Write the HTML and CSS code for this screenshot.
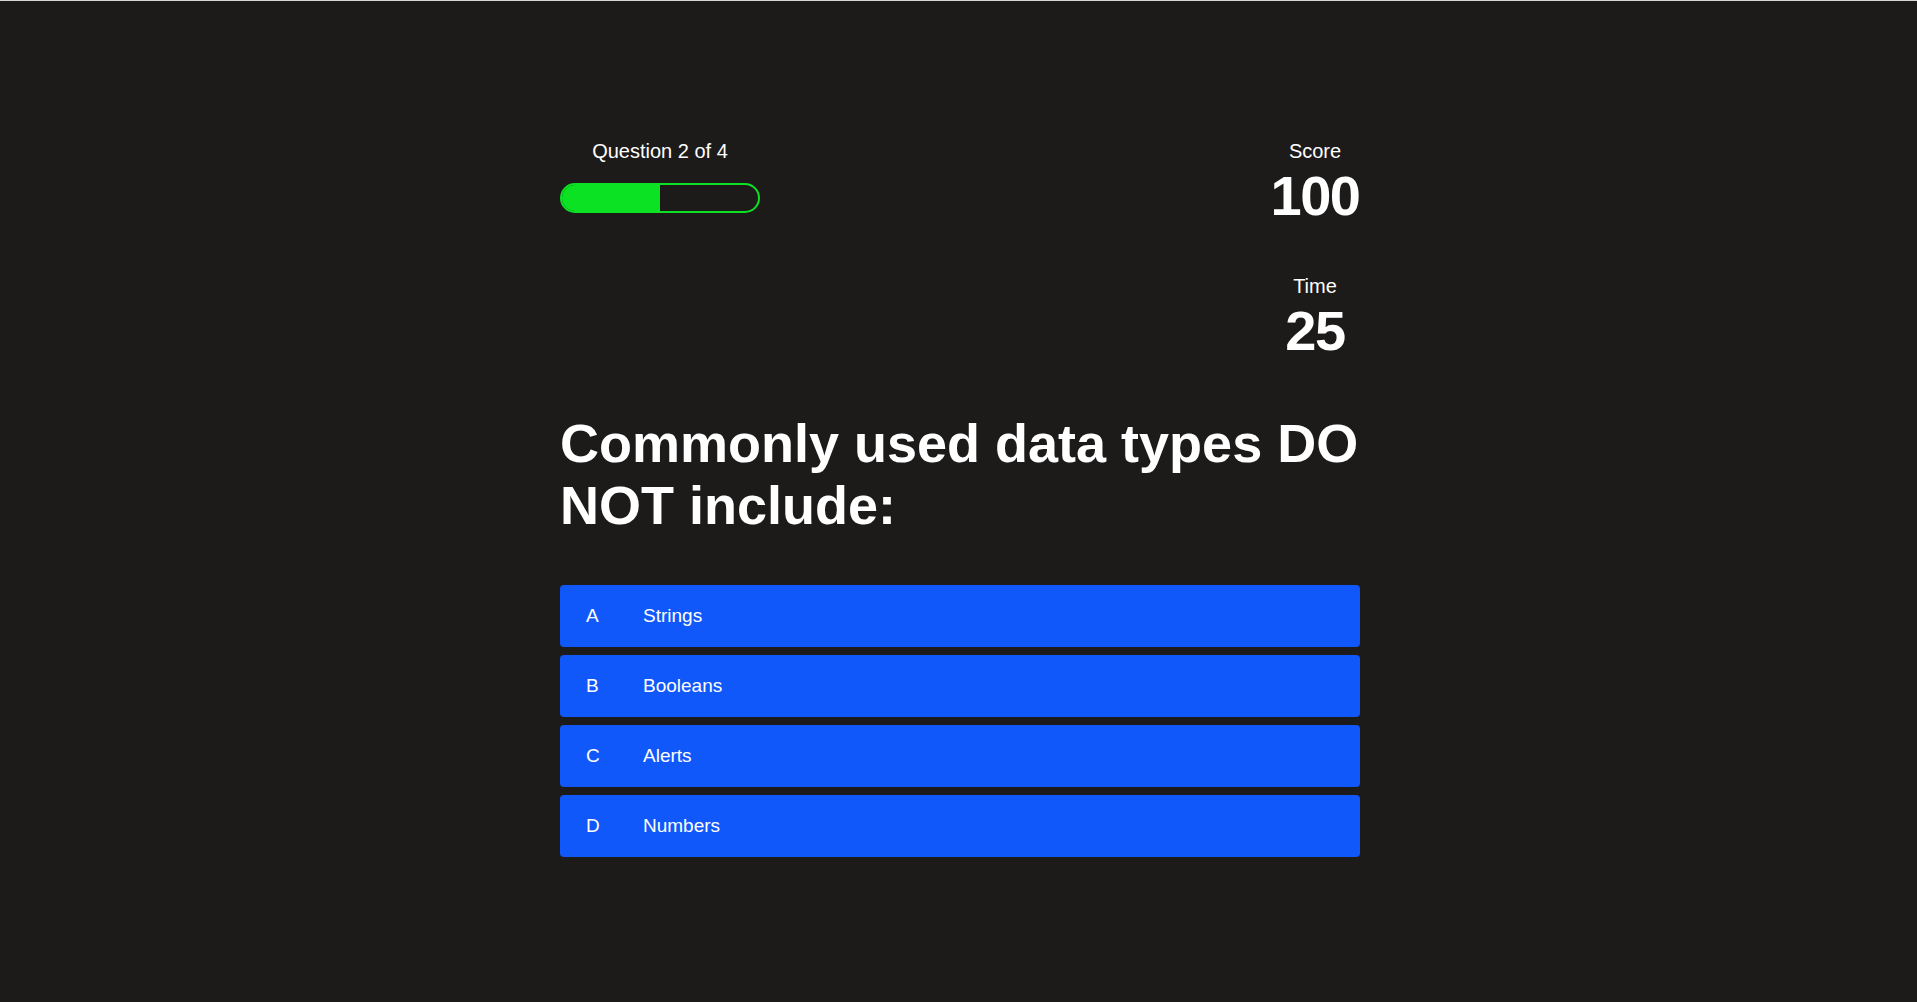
FILE: index.html
```html
<!DOCTYPE html>
<html lang="en">
<head>
<meta charset="utf-8">
<title>Quiz</title>
<link rel="stylesheet" href="styles.css">
</head>
<body>
<div class="page">
  <main class="quiz">
    <header class="top">
      <div class="progress">
        <div class="progress-label">Question 2 of 4</div>
        <div class="bar"><div class="bar-fill" style="width: 50%"></div></div>
      </div>
      <div class="stats">
        <div class="stat">
          <div class="stat-label">Score</div>
          <div class="stat-value">100</div>
        </div>
        <div class="stat stat-time">
          <div class="stat-label">Time</div>
          <div class="stat-value">25</div>
        </div>
      </div>
    </header>
    <h1 class="question">Commonly used data types DO NOT include:</h1>
    <div class="choices">
      <button class="choice"><span class="choice-key">A</span><span class="choice-text">Strings</span></button>
      <button class="choice"><span class="choice-key">B</span><span class="choice-text">Booleans</span></button>
      <button class="choice"><span class="choice-key">C</span><span class="choice-text">Alerts</span></button>
      <button class="choice"><span class="choice-key">D</span><span class="choice-text">Numbers</span></button>
    </div>
  </main>
</div>
</body>
</html>
```
FILE: styles.css
```css
* { box-sizing: border-box; }
html, body {
  margin: 0;
  padding: 0;
  background: #1c1b19;
}
body {
  font-family: "Liberation Sans", Arial, Helvetica, sans-serif;
  color: #ffffff;
  min-height: 1002px;
  border-top: 1px solid #d6d6d6;
}
.page {
  padding: 139px 0 0 3px;
}
.quiz {
  width: 800px;
  margin: 0 auto;
}
.top {
  display: flex;
  justify-content: space-between;
  align-items: flex-start;
}
.progress {
  width: 200px;
}
.progress-label {
  font-size: 20px;
  line-height: 23px;
  text-align: center;
}
.bar {
  margin-top: 20px;
  width: 200px;
  height: 30px;
  border: 2px solid #0be223;
  border-radius: 15px;
  overflow: hidden;
}
.bar-fill {
  height: 100%;
  background: #0be223;
}
.stats {
  width: 96px;
  display: flex;
  flex-direction: column;
  align-items: stretch;
  margin-right: -3px;
}
.stat {
  text-align: center;
}
.stat-time {
  margin-top: 46px;
}
.stat-label {
  font-size: 20px;
  line-height: 23px;
}
.stat-value {
  font-size: 56px;
  font-weight: 700;
  letter-spacing: -1.5px;
  line-height: 66px;
}
.question {
  margin: 48px 0 49px;
  font-size: 54px;
  font-weight: 700;
  line-height: 62px;
}
.choices {
  display: flex;
  flex-direction: column;
  gap: 8px;
}
.choice {
  display: flex;
  align-items: center;
  width: 100%;
  height: 62px;
  padding: 0 25px 0 26px;
  border: 0;
  border-radius: 4px;
  background: #1158fb;
  color: #ffffff;
  font-family: "Liberation Sans", Arial, Helvetica, sans-serif;
  font-size: 19px;
  text-align: left;
  cursor: pointer;
}
.choice-key {
  flex: 0 0 57px;
}
```
